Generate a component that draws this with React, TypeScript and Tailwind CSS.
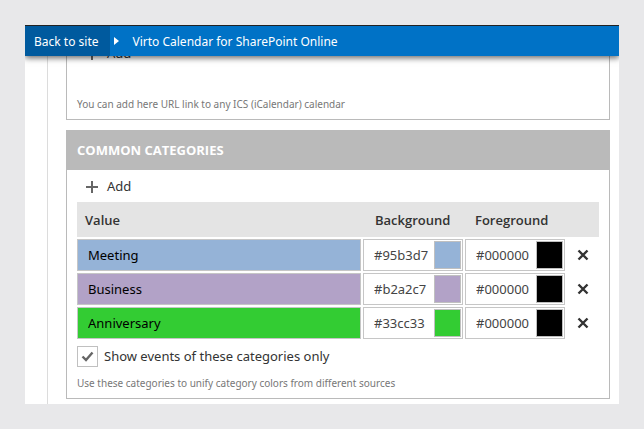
import { useState } from 'react';

type Category = { name: string; background: string; foreground: string };

const initialCategories: Category[] = [
  { name: 'Meeting', background: '#95b3d7', foreground: '#000000' },
  { name: 'Business', background: '#b2a2c7', foreground: '#000000' },
  { name: 'Anniversary', background: '#33cc33', foreground: '#000000' },
];

function AddButton({ onClick, label }: { onClick?: () => void; label: string }) {
  return (
    <button type="button" aria-label={label} onClick={onClick} className="flex h-8 items-center gap-2 pt-[2px] pl-2 text-[#333]">
      <svg width="14" height="14" viewBox="0 0 14 14" aria-hidden="true">
        <path d="M7 1v12M1 7h12" stroke="#666" strokeWidth="2" fill="none" />
      </svg>
      Add
    </button>
  );
}

function ColorField({ value, label, onChange }: { value: string; label: string; onChange: (v: string) => void }) {
  return (
    <div className="flex h-8 items-start border border-[#c6c6c6] bg-white pt-px pr-px">
      <input
        type="text"
        aria-label={label}
        value={value}
        onChange={(e) => onChange(e.target.value)}
        className="h-7 w-0 min-w-0 flex-1 bg-transparent pl-[10px] text-[#444] outline-none"
      />
      <input
        type="color"
        aria-label={`${label} picker`}
        value={value}
        onChange={(e) => onChange(e.target.value)}
        className="h-[28px] w-[27px] shrink-0 appearance-none border border-[#c0c0c0] bg-transparent p-0 [&::-webkit-color-swatch]:rounded-none [&::-webkit-color-swatch]:border-0 [&::-webkit-color-swatch-wrapper]:p-0"
      />
    </div>
  );
}

export default function App() {
  const [rows, setRows] = useState(initialCategories);
  const [only, setOnly] = useState(true);

  const update = (index: number, patch: Partial<Category>) =>
    setRows(rows.map((row, i) => (i === index ? { ...row, ...patch } : row)));

  return (
    <div className="min-h-screen bg-[#e8e8ea] p-[25px] font-['Noto_Sans','Open_Sans',sans-serif] text-[13px] text-[#333]">
      <div className="overflow-hidden bg-white">
        <header className="relative z-10 flex h-[31px] items-stretch border-t border-[#222] bg-[#0072c6] text-[12px] text-white shadow-[0_2px_6px_rgba(0,0,0,0.6)]">
          <a href="#site" className="flex items-center bg-[#005a9e] pt-[2px] pr-3 pl-[9px]">
            Back to site
          </a>
          <svg width="5" height="8" viewBox="0 0 5 8" aria-hidden="true" className="ml-1 self-center">
            <path d="M0 0l5 4-5 4z" fill="#fff" />
          </svg>
          <a href="#calendar" className="ml-[13px] flex items-center pt-[2px]">
            Virto Calendar for SharePoint Online
          </a>
        </header>

        <div className="ml-[22px] border-l border-[#dcdcdc] pr-[9px] pb-[5px] pl-[18px]">
          <div className="-mt-5 border border-[#bababa] px-[10px] pb-[6px]">
            <AddButton label="Add calendar link" />
            <p className="mt-[26px] text-[10px] leading-[18px] text-[#777]">
              You can add here URL link to any ICS (iCalendar) calendar
            </p>
          </div>

          <section className="mt-[10px] border border-t-0 border-[#bababa]">
            <h2 className="flex h-10 items-center bg-[#bababa] px-[10px] pt-[2px] font-['Open_Sans','Noto_Sans',sans-serif] font-bold text-white">
              COMMON CATEGORIES
            </h2>
            <div className="px-[10px] pb-[6px]">
              <AddButton
                label="Add category"
                onClick={() => setRows([...rows, { name: '', background: '#ffffff', foreground: '#000000' }])}
              />
              <table className="w-full table-fixed border-collapse">
                <thead>
                  <tr className="h-[35px] bg-[#e4e4e4] text-left font-['Open_Sans','Noto_Sans',sans-serif]">
                    <th className="p-0 pt-[2px] pl-2 font-semibold">Value</th>
                    <th className="w-[102px] p-0 pt-[2px] pl-3 font-semibold">Background</th>
                    <th className="w-[102px] p-0 pt-[2px] pl-[10px] font-semibold">Foreground</th>
                    <th className="w-8 p-0" aria-label="Remove" />
                  </tr>
                </thead>
                <tbody>
                  {rows.map((row, i) => (
                    <tr key={i}>
                      <td className="p-0 pt-[2px] pr-[2px]">
                        <input
                          type="text"
                          aria-label="Category name"
                          value={row.name}
                          onChange={(e) => update(i, { name: e.target.value })}
                          style={{ backgroundColor: row.background, color: row.foreground }}
                          className="block h-8 w-full border border-[#c6c6c6] px-[10px] outline-none"
                        />
                      </td>
                      <td className="p-0 pt-[2px] pr-[2px]">
                        <ColorField
                          label="Background color"
                          value={row.background}
                          onChange={(background) => update(i, { background })}
                        />
                      </td>
                      <td className="p-0 pt-[2px] pr-[2px]">
                        <ColorField
                          label="Foreground color"
                          value={row.foreground}
                          onChange={(foreground) => update(i, { foreground })}
                        />
                      </td>
                      <td className="p-0 pt-[2px]">
                        <button
                          type="button"
                          aria-label={`Remove ${row.name}`}
                          onClick={() => setRows(rows.filter((_, j) => j !== i))}
                          className="flex h-8 w-8 items-center justify-center"
                        >
                          <svg width="12" height="12" viewBox="0 0 12 12" aria-hidden="true">
                            <path d="M1.5 1.5l9 9M10.5 1.5l-9 9" stroke="#333" strokeWidth="2.4" fill="none" />
                          </svg>
                        </button>
                      </td>
                    </tr>
                  ))}
                </tbody>
              </table>
              <label className="mt-[7px] flex h-[21px] items-center gap-[6px]">
                <span className="grid size-[21px] place-items-center">
                  <input
                    type="checkbox"
                    checked={only}
                    onChange={(e) => setOnly(e.target.checked)}
                    className="peer col-start-1 row-start-1 size-[21px] appearance-none border border-[#c0c0c0] bg-white"
                  />
                  <svg
                    width="13"
                    height="11"
                    viewBox="0 0 13 11"
                    aria-hidden="true"
                    className="pointer-events-none invisible col-start-1 row-start-1 peer-checked:visible"
                  >
                    <path d="M1.5 5.5l3.500 3.500L11.500 1.500" stroke="#666" strokeWidth="2.4" fill="none" />
                  </svg>
                </span>
                Show events of these categories only
              </label>
              <p className="mt-[7px] text-[10px] leading-[18px] text-[#777]">
                Use these categories to unify category colors from different sources
              </p>
            </div>
          </section>
        </div>
      </div>
    </div>
  );
}
